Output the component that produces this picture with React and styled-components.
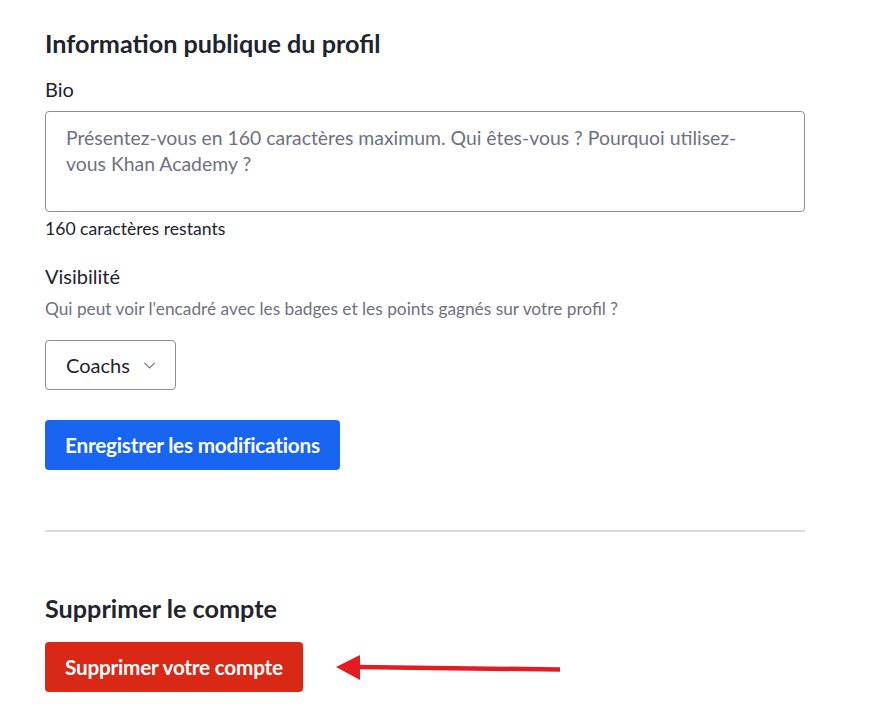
import React from "react";
import styled, { createGlobalStyle } from "styled-components";

const Global = createGlobalStyle`
  html, body { margin: 0; padding: 0; background: #fff; }
  body { font-family: Lato, "Noto Sans", sans-serif; color: #21242c; }
  * { box-sizing: border-box; }
`;

const Page = styled.div`
  width: 760px;
  margin-left: 45px;
  padding-top: 27px;
  display: flex;
  flex-direction: column;
`;

const Heading = styled.h2`
  margin: ${(p) => p.$mt || 0}px 0 0;
  font-size: 25.2px;
  line-height: 32px;
  font-weight: 700;
  color: #21242c;
`;

const Label = styled.div`
  font-size: 20px;
  line-height: 24px;
  color: #21242c;
  margin-top: ${(p) => p.$mt || 0}px;
`;

const TextArea = styled.textarea`
  margin-top: 10px;
  width: 760px;
  height: 101px;
  border: 1px solid #8d8f96;
  border-radius: 4px;
  padding: 13px 40px 12px 20px;
  font-family: Lato, "Noto Sans", sans-serif;
  font-size: 19.4px;
  line-height: 26px;
  resize: none;
  color: #21242c;
  &::placeholder { color: #6f7180; }
`;

const Small = styled.div`
  font-size: ${(p) => (p.$muted ? 17.3 : 17.6)}px;
  line-height: 22px;
  color: ${(p) => (p.$muted ? "#6f7180" : "#21242c")};
  margin-top: ${(p) => p.$mt || 0}px;
`;

const SelectButton = styled.button`
  margin-top: ${(p) => p.$mt || 0}px;
  align-self: flex-start;
  width: 131px;
  height: 50px;
  display: flex;
  align-items: center;
  gap: 14px;
  padding: 0 20px;
  border: 1px solid #8d8f96;
  border-radius: 4px;
  background: #fff;
  font-family: Lato, "Noto Sans", sans-serif;
  font-size: 20px;
  color: #21242c;
`;

const Button = styled.button`
  margin-top: ${(p) => p.$mt || 0}px;
  align-self: flex-start;
  height: 50px;
  padding: 0 20px;
  border: none;
  border-radius: 4px;
  background: ${(p) => p.$bg};
  color: #fff;
  font-family: Lato, "Noto Sans", sans-serif;
  font-weight: 700;
  font-size: 20.7px;
  letter-spacing: -0.2px;
`;

const Divider = styled.hr`
  margin: 60px 0 0;
  border: none;
  height: 2px;
  background: #dcdcdd;
`;

const Row = styled.div`
  margin-top: 18px;
  display: flex;
  align-items: center;
  gap: 33px;
`;

export default function App() {
  return (
    <>
      <Global />
      <Page>
        <Heading>Information publique du profil</Heading>
        <Label $mt={18}>Bio</Label>
        <TextArea placeholder="Présentez-vous en 160 caractères maximum. Qui êtes-vous ? Pourquoi utilisez-vous Khan Academy ?" />
        <Small $mt={6}>160 caractères restants</Small>
        <Label $mt={24}>Visibilité</Label>
        <Small $muted $mt={10}>Qui peut voir l'encadré avec les badges et les points gagnés sur votre profil ?</Small>
        <SelectButton $mt={20}>
          Coachs
          <svg width="14" height="9" viewBox="0 0 14 9" fill="none">
            <path d="M1 1.5 L7 7.5 L13 1.5" stroke="#6f7180" strokeWidth="1.5" strokeLinecap="round" strokeLinejoin="round" />
          </svg>
        </SelectButton>
        <Button $bg="#1865f2" $mt={30}>Enregistrer les modifications</Button>
        <Divider />
        <Heading $mt={60}>Supprimer le compte</Heading>
        <Row>
          <Button $bg="#d92916">Supprimer votre compte</Button>
          <svg width="226" height="30" viewBox="0 0 226 30">
            <line x1="20" y1="15" x2="224" y2="17.5" stroke="#e41b21" strokeWidth="4.5" />
            <polygon points="0,15 24,3 24,28" fill="#e41b21" />
          </svg>
        </Row>
      </Page>
    </>
  );
}
